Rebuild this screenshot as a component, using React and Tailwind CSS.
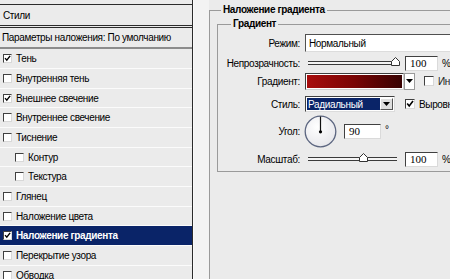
import React from 'react';

const font = { fontFamily: '"Liberation Sans", Arial, sans-serif', letterSpacing: '-0.35px' };

const ROWS = [
  { label: 'Тень', checked: true, h: 'h-[20px]' },
  { label: 'Внутренняя тень', h: 'h-[20px]' },
  { label: 'Внешнее свечение', checked: true, h: 'h-[19px]' },
  { label: 'Внутреннее свечение', h: 'h-[20px]' },
  { label: 'Тиснение', h: 'h-[20px]' },
  { label: 'Контур', sub: true, h: 'h-[19px]' },
  { label: 'Текстура', sub: true, h: 'h-[20px]' },
  { label: 'Глянец', h: 'h-[20px]' },
  { label: 'Наложение цвета', h: 'h-[19px]' },
  { label: 'Наложение градиента', checked: true, active: true, h: 'h-[20px]' },
  { label: 'Перекрытие узора', h: 'h-[20px]' },
  { label: 'Обводка', h: 'h-[20px]' },
];

function Check({ checked, big }) {
  const size = big ? 'w-[10px] h-[10px]' : 'w-[9px] h-[9px]';
  return (
    <span className={`relative shrink-0 ${size} bg-white border border-t-[#404040] border-l-[#404040] border-b-[#d8d8d8] border-r-[#d8d8d8]`}>
      {checked && (
        <svg className="absolute inset-0 w-full h-full" viewBox="0 0 8 8">
          <path d="M1.2 3.6 L3.2 6 L7 1" fill="none" stroke="#000" strokeWidth="1.6" />
        </svg>
      )}
    </span>
  );
}

function Arrow() {
  return (
    <svg width="7" height="4" viewBox="0 0 7 4">
      <path d="M0 0 H7 L3.5 4 Z" fill="#000" />
    </svg>
  );
}

function NumBox({ value, w }) {
  return (
    <div
      className={`${w} h-[15px] bg-white border border-t-[#404040] border-l-[#404040] border-b-[#dadada] border-r-[#dadada] pl-[4px] text-[11px] leading-[13px] text-black`}
      style={{ fontFamily: '"Liberation Serif", "Times New Roman", serif', letterSpacing: 0 }}
    >
      {value}
    </div>
  );
}

function Slider({ pos }) {
  return (
    <div className="relative ml-[3px] w-[89px] h-[4px] border-y border-[#3a3a3a] bg-[#f4f4f4]">
      <svg className="absolute top-[-5px]" style={{ left: pos }} width="9" height="9" viewBox="0 0 9 9">
        <path d="M0.5 8.5 V4.5 L4.5 0.5 L8.5 4.5 V8.5 Z" fill="#fff" stroke="#333" strokeWidth="1" />
      </svg>
    </div>
  );
}

function Label({ children }) {
  return <div className="w-[82px] shrink-0 text-right whitespace-nowrap">{children}</div>;
}

export default function App() {
  return (
    <div className="w-[450px] h-[279px] overflow-hidden flex bg-[#ebebeb] text-[10px] text-black" style={font}>
      {/* Styles list */}
      <div className="w-[193px] shrink-0 border-r border-[#2b2b2b] pt-[4px] flex flex-col bg-[#ebebeb]">
        <div className="h-[24px] border-t border-b-[3px] border-double border-[#2b2b2b] flex items-center pl-[3px] shrink-0">
          Стили
        </div>
        <div className="h-[21px] border-b-2 border-[#8c8c8c] flex items-center pl-[2px] shrink-0 whitespace-nowrap">
          Параметры наложения: По умолчанию
        </div>
        {ROWS.map((r) => (
          <div
            key={r.label}
            className={`${r.h} shrink-0 border-b border-[#fbfbfb] flex items-center gap-[4px] whitespace-nowrap ${r.sub ? 'pl-[15px]' : 'pl-[3px]'} ${r.active ? 'bg-[#0a2468] text-white font-bold' : 'bg-[#ebebeb]'}`}
          >
            <Check checked={r.checked} />
            <span>{r.label}</span>
          </div>
        ))}
      </div>

      {/* Strip */}
      <div className="w-[16px] shrink-0 bg-[#f3f3f3] border-l border-[#fafafa]" />

      {/* Gradient overlay settings */}
      <fieldset className="flex-1 min-w-0 mt-[4px] border-t border-l border-[#9a9a9a]">
        <legend className="ml-[11px] px-[2px] font-bold leading-[12px] whitespace-nowrap">Наложение градиента</legend>
        <fieldset className="ml-[7px] mt-[2px] h-[154px] border-t border-l border-b border-[#9a9a9a]">
          <legend className="ml-[13px] px-[2px] font-bold leading-[12px]">Градиент</legend>
          <div className="pt-[3px] flex flex-col whitespace-nowrap">
            <div className="h-[20px] flex items-center gap-[5px]">
              <Label>Режим:</Label>
              <div className="flex-1 h-[18px] bg-white border border-t-[#505050] border-l-[#505050] border-b-[#dcdcdc] border-r-[#dcdcdc] pl-[3px] flex items-center">
                Нормальный
              </div>
            </div>
            <div className="mt-[1px] h-[18px] flex items-center gap-[5px]">
              <Label>Непрозрачность:</Label>
              <Slider pos="83px" />
              <div className="ml-[3px]">
                <NumBox value="100" w="w-[33px]" />
              </div>
              <span className="ml-[-1px]">%</span>
            </div>
            <div className="h-[18px] flex items-center gap-[5px]">
              <Label>Градиент:</Label>
              <div className="flex items-center shrink-0">
                <div className="w-[99px] h-[17px] border border-t-[#404040] border-l-[#404040] border-b-[#cfcfcf] border-r-[#cfcfcf] p-[1px] bg-white">
                  <div className="w-full h-full bg-linear-to-r from-[#a80c0c] via-[#7a0505] to-[#380202]" />
                </div>
                <div className="w-[11px] h-[17px] bg-white border border-[#9a9a9a] flex items-center justify-center">
                  <Arrow />
                </div>
              </div>
              <div className="ml-[4px] flex items-center gap-[4px] shrink-0">
                <Check big />
                <span className="text-[#222]">Инверсия</span>
              </div>
            </div>
            <div className="mt-[5px] h-[18px] flex items-center gap-[5px]">
              <Label>Стиль:</Label>
              <div className="w-[90px] shrink-0 h-[16px] bg-white border border-t-[#404040] border-l-[#404040] border-b-[#dcdcdc] border-r-[#dcdcdc] flex items-stretch p-[1px]">
                <div className="flex-1 bg-[#0a2468] text-white pl-[1px] flex items-center">Радиальный</div>
                <div className="w-[13px] bg-[#dedede] border border-t-white border-l-white border-b-[#555] border-r-[#555] flex items-center justify-center">
                  <Arrow />
                </div>
              </div>
              <div className="ml-[5px] flex items-center gap-[4px] shrink-0">
                <Check big checked />
                <span>Выровнять по слою</span>
              </div>
            </div>
            <div className="mt-[2px] h-[32px] flex items-center gap-[5px]">
              <Label>Угол:</Label>
              <svg width="33" height="33" viewBox="0 0 33 33" className="shrink-0 -ml-[1px]">
                <defs>
                  <radialGradient id="dial" cx="40%" cy="35%" r="70%">
                    <stop offset="0" stopColor="#ffffff" />
                    <stop offset="1" stopColor="#e6e6ea" />
                  </radialGradient>
                </defs>
                <circle cx="16.5" cy="16.5" r="15.3" fill="url(#dial)" stroke="#5c6680" strokeWidth="1.3" />
                <line x1="16.5" y1="16.5" x2="16.5" y2="1.5" stroke="#111" strokeWidth="1.2" />
                <circle cx="16.5" cy="16.8" r="1.6" fill="#000" />
              </svg>
              <div className="ml-[2px]">
                <NumBox value="90" w="w-[37px]" />
              </div>
              <span className="self-start mt-[7px] ml-[-1px]">°</span>
            </div>
            <div className="mt-[3px] h-[18px] flex items-center gap-[5px]">
              <Label>Масштаб:</Label>
              <Slider pos="51px" />
              <div className="ml-[3px]">
                <NumBox value="100" w="w-[33px]" />
              </div>
              <span className="ml-[-1px]">%</span>
            </div>
          </div>
        </fieldset>
      </fieldset>
    </div>
  );
}
